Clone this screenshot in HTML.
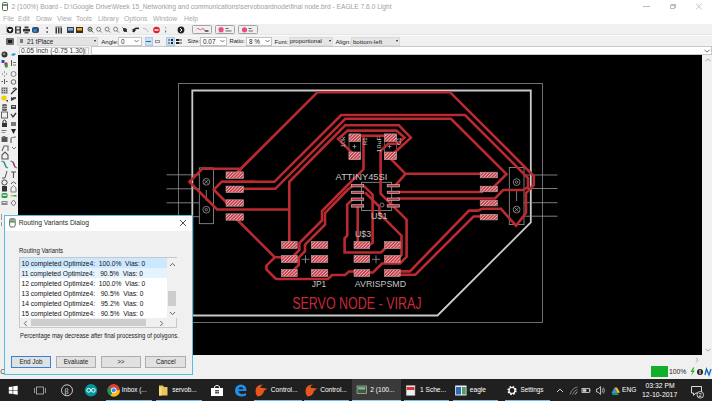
<!DOCTYPE html>
<html><head><meta charset="utf-8">
<style>
*{margin:0;padding:0;box-sizing:border-box}
html,body{width:712px;height:401px;overflow:hidden;background:#f0f0f0;font-family:"Liberation Sans",sans-serif;position:relative}
.a{position:absolute}
.nw{white-space:nowrap}
#title{left:0;top:0;width:712px;height:12px;background:#fff}
#menu{left:0;top:12px;width:712px;height:11.5px;background:#fff}
#menu span{position:absolute;top:2.5px;font-size:6.8px;color:#a8a8a8;line-height:8px}
#tb1{left:0;top:23.8px;width:712px;height:11.2px;background:#f0f0f0;border-bottom:1px solid #e6e6e6}
#tb2{left:0;top:35px;width:712px;height:10.5px;background:#f1f1f1;border-top:1px solid #f9f9f9}
#cmd{left:0;top:45.5px;width:712px;height:9.5px;background:#f0f0f0}
#canvas{left:18px;top:55px;width:684.4px;height:300px;background:#000;overflow:hidden}
#lefttb{left:0;top:46px;width:18px;height:317px;background:#f0f0f0}
#vscroll{left:703px;top:55px;width:9px;height:300px;background:#f0f0f0}
#hscroll{left:18px;top:355px;width:694px;height:8px;background:#f0f0f0}
#status{left:0;top:363px;width:712px;height:15.5px;background:#f0f0f0}
#taskbar{left:0;top:378.5px;width:712px;height:22.5px;background:#202020}
.combo{position:absolute;background:#fff;border:1px solid #c4c4c4;height:9px;top:0.7px;font-size:6.4px;color:#222;padding-left:2px;line-height:7.5px}
.lbl{position:absolute;top:1.9px;font-size:6.1px;color:#222;line-height:7px}
.dd{position:absolute;right:2px;top:0px;font-size:6px;color:#555}
.tbtn{position:absolute;top:1.6px;width:20.2px;height:8.4px;border:1px solid #a4a4a4;border-radius:1.5px;background:#efefef}
.ico{position:absolute}
.task{position:absolute;top:0;height:22.5px;font-size:6.8px;color:#fff;line-height:22px}
.uline{position:absolute;bottom:0;height:1.5px;background:#76b9ed}
</style></head><body>
<!-- TITLE BAR -->
<div id="title" class="a">
  <div class="a" style="left:2px;top:2.3px;width:6px;height:8.5px;border:1px solid #666;border-radius:1.5px;background:#fff"></div>
  <div class="a" style="left:3px;top:4px;width:4px;height:2px;background:#5aa55a"></div>
  <div class="a nw" style="left:11.5px;top:2.5px;font-size:6.65px;line-height:8px;color:#a0a0a0">2 (100%) Board - D:\Google Drive\Week 15_Networking and communications\servoboardnode\final node.brd - EAGLE 7.6.0 Light</div>
  <div class="a" style="left:643px;top:5.5px;width:6.5px;height:1px;background:#bdbdbd"></div>
  <div class="a" style="left:669.5px;top:4.5px;width:5px;height:4.5px;border:1px solid #bdbdbd"></div>
  <div class="a" style="left:670.5px;top:3.5px;width:5px;height:4.5px;border-top:1px solid #bdbdbd;border-right:1px solid #bdbdbd"></div>
  <svg class="a" style="left:695px;top:3px" width="8" height="7"><path d="M1 0.5 L6.5 6.5 M6.5 0.5 L1 6.5" stroke="#bdbdbd" stroke-width="0.9"/></svg>
</div>
<!-- MENU -->
<div id="menu" class="a">
  <span style="left:3px">File</span><span style="left:18px">Edit</span><span style="left:36px">Draw</span><span style="left:57px">View</span><span style="left:76px">Tools</span><span style="left:98px">Library</span><span style="left:124px">Options</span><span style="left:153px">Window</span><span style="left:184px">Help</span>
</div>
<!-- TOOLBAR 1 -->
<div id="tb1" class="a">
  <div class="a" style="left:5.5px;top:2px;width:1px;height:8px;border-left:1px dotted #bbb"></div>
  <svg class="a" style="left:0;top:0" width="270" height="12">
    <!-- open -->
    <circle cx="10" cy="6" r="3.3" fill="#222"/><path d="M8 5 L12 5 L10 8 Z" fill="#fff"/>
    <!-- save -->
    <rect x="15" y="2.5" width="6" height="7" fill="#333"/><rect x="16.5" y="3.3" width="3" height="2" fill="#eee"/><rect x="16.5" y="6.5" width="3" height="2.3" fill="#eee"/>
    <!-- print -->
    <rect x="23" y="5" width="7" height="2.5" fill="#333"/><rect x="24.5" y="2.5" width="4" height="2" fill="#444"/><rect x="24.5" y="8" width="4" height="1.5" fill="#555"/>
    <!-- cam -->
    <rect x="32" y="3" width="7" height="6" rx="2" fill="#3a4a66"/><circle cx="35" cy="6.5" r="1.8" fill="#1e90e0"/>
    <!-- dots -->
    <rect x="46.5" y="3" width="1.3" height="2" fill="#555"/><rect x="46.5" y="7" width="1.3" height="2" fill="#555"/>
    <!-- script -->
    <rect x="55.5" y="3.5" width="1.5" height="6" fill="#333"/><rect x="58" y="3.5" width="1.5" height="6" fill="#333"/><rect x="60.5" y="3.5" width="1.5" height="6" fill="#333"/>
    <rect x="55.5" y="2.5" width="6.5" height="1" fill="#777"/>
    <!-- brd/sch -->
    <rect x="67" y="3" width="7" height="6" fill="#2b3f57"/><rect x="68" y="4" width="5" height="2.5" fill="#8fb2cc"/>
    <rect x="76" y="3" width="7" height="6" fill="#3a2c12"/><rect x="77" y="4" width="5" height="2.5" fill="#f0a830"/>
    <!-- zooms -->
    <g fill="none" stroke="#333" stroke-width="0.9"><circle cx="90" cy="5.2" r="2"/><path d="M91.5 6.7 L93.3 8.5"/><path d="M89 5.2 H91" stroke-width="0.8"/></g>
    <g fill="none" stroke="#666" stroke-width="0.8"><circle cx="98.6" cy="5.2" r="2"/><path d="M100.1 6.7 L101.9 8.5"/></g>
    <g fill="none" stroke="#666" stroke-width="0.8"><circle cx="107.1" cy="5.2" r="2"/><path d="M108.6 6.7 L110.4 8.5"/></g>
    <g fill="none" stroke="#666" stroke-width="0.8"><circle cx="115.6" cy="5.2" r="2"/><path d="M117.1 6.7 L118.9 8.5"/></g>
    <g fill="none" stroke="#333" stroke-width="1"><path d="M122.5 3.5 L127 8"/><circle cx="125" cy="6" r="1.5" fill="#333"/></g>
    <!-- undo/redo -->
    <path d="M133 8 Q134 3.5 139 4.5" stroke="#222" stroke-width="1.4" fill="none"/><path d="M132 5 L134 8.5 L136 6" fill="#222"/>
    <path d="M143 4.5 Q147 4 148 8" stroke="#bbb" stroke-width="1" fill="none"/>
    <!-- stop -->
    <circle cx="156.5" cy="6" r="3.3" fill="#e0202a"/><rect x="154.5" y="5.3" width="4" height="1.4" fill="#fff"/>
    <rect x="165" y="3" width="1.2" height="1.2" fill="#999"/><rect x="165" y="6.5" width="1.2" height="2" fill="#777"/>
    <!-- help -->
    <circle cx="181" cy="6" r="3.4" fill="#222"/><path d="M180 4.2 L182 6 L180 7.8" stroke="#fff" stroke-width="1" fill="none"/>
  </svg>
  <div class="tbtn" style="left:192.3px"><svg width="18" height="7" style="position:absolute;left:1px;top:0"><path d="M2.5 3.5 Q3.5 1.5 5 3 T8 3 Q9 1.5 10 3.2 Q10.5 5.5 11 5" stroke="#e85070" stroke-width="0.9" fill="none"/><rect x="11" y="4" width="3.5" height="2" fill="#6a6a6a"/></svg></div>
  <div class="tbtn" style="left:215.3px"><svg width="18" height="7" style="position:absolute;left:1px;top:0"><path d="M2.5 1.3 L5.5 1.3 L6.8 3 L6 6.3 L2.2 6.3 L1.3 3 Z" fill="#ea4f78"/><rect x="8.5" y="2" width="3" height="0.9" fill="#555"/><rect x="8.5" y="4.5" width="6" height="0.9" fill="#555"/></svg></div>
  <div class="tbtn" style="left:238.3px"><svg width="18" height="7" style="position:absolute;left:1px;top:0"><circle cx="4.5" cy="3.8" r="2.6" fill="#ea4f78"/><rect x="8.5" y="2" width="3" height="0.9" fill="#555"/><rect x="8.5" y="4.5" width="4.5" height="0.9" fill="#555"/></svg></div>
</div>
<!-- TOOLBAR 2 -->
<div id="tb2" class="a">
  <div class="a" style="left:6px;top:1.5px;width:7.5px;height:7.5px;background:#6e6e6e;border-radius:1px"></div>
  <div class="a" style="left:7.5px;top:4px;width:4.5px;height:2.5px;background:#1a1a1a"></div>
  <div class="a" style="left:17px;top:0.5px;width:81px;height:9px;background:#e3e3e3;border:1px solid #d6d6d6"></div>
  <div class="a" style="left:19.7px;top:2.6px;width:3.8px;height:4.2px;background:#7a7a7a"></div>
  <div class="a nw" style="left:27px;top:1.6px;font-size:6.3px;line-height:7px;color:#222">21 tPlace</div>
  <div class="a" style="left:94px;top:4.3px;width:0;height:0;border-left:1.8px solid transparent;border-right:1.8px solid transparent;border-top:2px solid #222"></div>
  <div class="lbl" style="left:101.2px">Angle:</div>
  <div class="combo" style="left:118px;width:23.5px">0<svg class="a" style="right:1.5px;top:1.5px" width="5" height="4"><path d="M0.5 1 L2.5 3 L4.5 1" stroke="#555" stroke-width="0.8" fill="none"/></svg></div>
  <div class="a" style="left:144.5px;top:1px;width:8px;height:8.5px;background:#c9e1f5;border:1px solid #a6cdee"></div>
  <div class="a" style="left:146px;top:4.5px;width:5px;height:1px;background:#557"></div>
  <div class="a" style="left:154.5px;top:3.5px;width:5px;height:3px;border:1px solid #999"></div>
  <div class="a" style="left:166px;top:1px;width:8.5px;height:8.5px;background:#c9e1f5;border:1px solid #a6cdee"></div>
  <div class="a" style="left:167.5px;top:2.5px;width:2.5px;height:2.5px;background:#8c8c8c"></div>
  <div class="a" style="left:170.5px;top:2.5px;width:2.5px;height:2.5px;background:#222"></div>
  <div class="a" style="left:167.5px;top:5.5px;width:2.5px;height:2.5px;background:#8c8c8c"></div>
  <div class="a" style="left:170.5px;top:5.5px;width:2.5px;height:2.5px;background:#222"></div>
  <div class="a" style="left:176px;top:2.5px;width:2.5px;height:2.5px;background:#222"></div>
  <div class="a" style="left:179px;top:2.5px;width:2.5px;height:2.5px;background:#999"></div>
  <div class="a" style="left:176px;top:5.5px;width:2.5px;height:2.5px;background:#222"></div>
  <div class="a" style="left:179px;top:5.5px;width:2.5px;height:2.5px;background:#999"></div>
  <div class="lbl" style="left:187.4px;font-size:5.7px">Size:</div>
  <div class="combo" style="left:200px;width:27px">0.07<svg class="a" style="right:1.5px;top:1.5px" width="5" height="4"><path d="M0.5 1 L2.5 3 L4.5 1" stroke="#555" stroke-width="0.8" fill="none"/></svg></div>
  <div class="lbl" style="left:229.6px;font-size:5.9px">Ratio:</div>
  <div class="combo" style="left:245.9px;width:26.2px">8 %<svg class="a" style="right:1.5px;top:1.5px" width="5" height="4"><path d="M0.5 1 L2.5 3 L4.5 1" stroke="#555" stroke-width="0.8" fill="none"/></svg></div>
  <div class="lbl" style="left:274.5px">Font:</div>
  <div class="a" style="left:288.7px;top:0.5px;width:44.5px;height:9px;background:#e5e5e5;border:1px solid #dadada"></div>
  <div class="a nw" style="left:289.9px;top:1.8px;font-size:6.07px;line-height:7px;color:#222">proportional</div>
  <div class="a" style="left:328.6px;top:4.3px;width:0;height:0;border-left:1.8px solid transparent;border-right:1.8px solid transparent;border-top:2px solid #222"></div>
  <div class="lbl" style="left:335.4px;font-size:6.2px">Align:</div>
  <div class="a" style="left:351.3px;top:0.5px;width:49px;height:9px;background:#e5e5e5;border:1px solid #dadada"></div>
  <div class="a nw" style="left:352.9px;top:1.8px;font-size:6.2px;line-height:7px;color:#222">bottom-left</div>
  <div class="a" style="left:396px;top:4.3px;width:0;height:0;border-left:1.8px solid transparent;border-right:1.8px solid transparent;border-top:2px solid #222"></div>
</div>
<!-- CMD -->
<div id="cmd" class="a">
  <div class="a" style="left:18.5px;top:1px;width:65px;height:8.5px;background:#fff;border:1px solid #d0d0d0"></div>
  <div class="a nw" style="left:20.6px;top:1.8px;font-size:6.9px;line-height:7px;color:#333;transform:scaleX(0.975);transform-origin:0 0">0.05 inch (-0.75 1.30)</div>
  <div class="a" style="left:85px;top:1px;width:4px;height:8.5px;background:#f6f6f6;border:1px solid #d0d0d0"></div>
  <div class="a" style="left:90.5px;top:0.5px;width:621.5px;height:9px;background:#fff;border:1px solid #c8c8c8"></div>
  <svg class="a" style="left:704px;top:3px" width="6" height="4"><path d="M0.5 1 L3 3 L5.5 1" stroke="#555" stroke-width="0.8" fill="none"/></svg>
</div>
<!-- LEFT TOOLBAR -->
<div id="lefttb" class="a">
  <svg width="18" height="317" style="position:absolute;left:0;top:0">
    <g transform="translate(0,-46)">
    <circle cx="4.5" cy="54.5" r="3" fill="#333"/><circle cx="4" cy="54" r="1.3" fill="#888"/>
    <path d="M11 55 Q13 52 16 54 Q14 57 11 55Z" fill="#1e90e0"/>
    <rect x="1.5" y="60" width="3" height="3" fill="#2050c0"/><circle cx="6" cy="64" r="1.7" fill="#d02030"/><circle cx="6.3" cy="66" r="1.7" fill="#2ba050"/>
    <rect x="11" y="60" width="1" height="6" fill="#555"/><rect x="13" y="62" width="3" height="1" fill="#777"/><rect x="13" y="64.5" width="3" height="1" fill="#777"/>
    <g fill="#555"><rect x="4" y="71.5" width="1" height="1"/><rect x="2" y="73.5" width="1" height="1"/><rect x="6" y="73.5" width="1" height="1"/><rect x="4" y="75.5" width="1" height="1"/></g>
    <circle cx="13.5" cy="74" r="2.5" fill="none" stroke="#777" stroke-width="0.9"/>
    <g fill="#555"><rect x="1.5" y="81" width="1.5" height="1"/><rect x="6" y="81" width="1.5" height="1"/><rect x="4" y="79" width="1" height="5"/></g>
    <circle cx="13.5" cy="82" r="2.3" fill="none" stroke="#555" stroke-width="0.9"/>
    <rect x="1.5" y="87.5" width="6" height="6" fill="#666"/><g stroke="#ddd" stroke-width="0.6"><path d="M1.5 89.5 H7.5 M1.5 91.5 H7.5 M3.5 87.5 V93.5 M5.5 87.5 V93.5"/></g>
    <path d="M11 94 L14 91 M13 89 Q15 87 16.5 89 Q15 90 14 91" stroke="#333" stroke-width="1.2" fill="none"/>
    <circle cx="4" cy="98" r="2.6" fill="#f0d000"/><rect x="6.5" y="100" width="1.5" height="1.5" fill="#222"/>
    <path d="M11 97 L15 99 L11 101 Z" fill="#333"/><rect x="13" y="97" width="3" height="2" fill="#555"/>
    <rect x="2" y="104" width="5" height="7" rx="1.5" fill="#666"/><rect x="2" y="106" width="5" height="0.7" fill="#ccc"/><rect x="2" y="108" width="5" height="0.7" fill="#ccc"/>
    <rect x="11" y="105" width="5" height="4" fill="#444"/><rect x="12" y="106" width="3" height="1" fill="#ccc"/>
    <rect x="1.5" y="112" width="6" height="6" fill="none" stroke="#555" stroke-width="0.9"/>
    <path d="M11 114 L13 117 L16 113" stroke="#333" stroke-width="1.3" fill="none"/>
    <rect x="2" y="123" width="5" height="4" fill="#333"/><path d="M3 123 V121 Q4.5 119 6 121 V123" stroke="#333" fill="none"/>
    <rect x="11" y="122" width="5" height="4" fill="#777"/>
    <rect x="1.5" y="130" width="5" height="1" fill="#777"/><rect x="1.5" y="132" width="4" height="1" fill="#999"/>
    <path d="M11 129 L16 129 L13.5 134 Z" fill="#222"/>
    <rect x="1.5" y="137" width="6" height="5" fill="#555"/><rect x="2.5" y="136" width="3" height="1.5" fill="#777"/>
    <path d="M11 143 V139 Q11 137 16 137" stroke="#666" stroke-width="1.2" fill="none"/>
    <path d="M2 151 L4 146 L8 146 L8 151" fill="none" stroke="#666" stroke-width="1.1"/>
    <path d="M12 147 L14 149 L16 147" stroke="#555" stroke-width="0.8" fill="none"/>
    <path d="M2 159 L2 155 L5 152 L8 155 L8 159 Z" fill="none" stroke="#555" stroke-width="1.1"/>
    <path d="M1.5 161 L4 162 L6 167 L8 168" stroke="#2a8ad0" stroke-width="1.2" fill="none"/><path d="M4 162 L6 167" stroke="#2aa050" stroke-width="1.2"/>
    <path d="M10.5 161 L13 162 L15 167 L17 168" stroke="#2a8ad0" stroke-width="1.2" fill="none"/><path d="M13 162 L15 167" stroke="#e02030" stroke-width="1.2"/>
    <path d="M2 178 L5 178 L7 171" stroke="#555" stroke-width="1" fill="none"/>
    <path d="M11 172 H16 M13.5 172 V178" stroke="#555" stroke-width="1.1" fill="none"/>
    <circle cx="4.5" cy="182.5" r="2.6" fill="none" stroke="#444" stroke-width="1"/>
    <path d="M11 184 Q13.5 180 16 184" stroke="#555" stroke-width="1" fill="none"/>
    <rect x="2" y="186" width="5" height="5.5" fill="#333"/>
    <path d="M11 192 L11 188 L13.5 185.5 L16 188 L16 192 Z" fill="none" stroke="#777" stroke-width="0.9"/>
    <rect x="1.5" y="193" width="6" height="5" rx="1.5" fill="#2ba048"/><rect x="2.5" y="194.5" width="4" height="1.5" fill="#ddd"/>
    <rect x="10.5" y="195" width="3" height="1.5" fill="#e6c000"/><rect x="13.5" y="195" width="3" height="1.5" fill="#2aa050"/>
    <rect x="1.5" y="201" width="6" height="4" fill="#888"/><rect x="2.5" y="202" width="4" height="1" fill="#ddd"/>
    <path d="M11 203 L13.5 200 L16 203 L13.5 206 Z" fill="none" stroke="#777" stroke-width="1"/>
    <path d="M1.5 214 V220 M1.5 222 V226" stroke="#888" stroke-width="0.8"/>
    </g>
  </svg>
</div>
<!-- CANVAS -->
<div id="canvas" class="a">
  <svg width="685" height="300" style="position:absolute;left:0;top:0">
    <g transform="translate(-18,-55)">
    <defs>
      <pattern id="hatch" patternUnits="userSpaceOnUse" width="2.3" height="2.3" patternTransform="rotate(45)">
        <rect width="2.3" height="2.3" fill="#c42f3a"/>
        <rect width="0.95" height="2.3" fill="#ebbcc0"/>
      </pattern>
    </defs>
    <!-- gray outer rect -->
    <rect x="178.5" y="83.5" width="364" height="239" fill="none" stroke="#7a7a7a" stroke-width="0.9"/>
    <!-- board outline -->
    <path d="M192.3 90.5 H530.8 V222.5 L437.5 315.5 H192.3 Z" fill="none" stroke="#cacaca" stroke-width="1.8"/>
    <!-- connector gray lines -->
    <g stroke="#9a9a9a" stroke-width="0.8" fill="none">
      <path d="M166.6 174.8 H199.3 M166.6 188.8 H199.3 M166.6 202.8 H199.3 M166.6 216.7 H199.3"/>
      <path d="M524 175 H557.5 M524 188.5 H557.5 M524 202.7 H557.5 M524 216.2 H557.5"/>
      <rect x="199.3" y="167.9" width="14.1" height="55.8"/>
      <rect x="509.3" y="167.5" width="14.7" height="57.1"/>
      <circle cx="206.3" cy="181.8" r="3.4"/><circle cx="206.3" cy="209.7" r="3.4"/>
      <circle cx="516.6" cy="182.1" r="3.4"/><circle cx="516.6" cy="209.6" r="3.4"/>
      <path d="M204.3 179.8 L208.3 183.8 M208.3 179.8 L204.3 183.8"/>
      <path d="M514.6 207.6 L518.6 211.6 M518.6 207.6 L514.6 211.6"/>
      <circle cx="206.3" cy="209.7" r="1.2"/><circle cx="516.6" cy="182.1" r="1.2"/>
      <path d="M206.3 190 V201 M516.6 190 V201"/>
      <!-- R1 C1 outlines -->
      <rect x="349" y="134" width="11.5" height="25.5" stroke="#8a8a8a" stroke-width="0.6"/>
      <rect x="384.5" y="134" width="12" height="25.5" stroke="#8a8a8a" stroke-width="0.6"/>
      <path d="M352.5 146.5 H356.5 M354.5 144.5 V148.5 M387.5 146.5 H391.5 M389.5 144.5 V148.5"/>
      <!-- IC outline -->
      <rect x="361.4" y="182.3" width="30.3" height="28.1"/>
      <circle cx="382" cy="205" r="2"/>
      <path d="M301.5 259.3 H309.5 M305.5 255.3 V263.3 M372 259.3 H380 M376 255.3 V263.3"/>
    </g>
    <!-- traces -->
    <g stroke="#bb2a30" stroke-width="2.6" fill="none" stroke-linejoin="miter" stroke-miterlimit="3">
      <path d="M237 175 L241 168.7 L202.5 168.7 L189.4 181.8 L217 209.5 L289.3 209.5"/>
      <path d="M232 177.5 L249.6 160 L317.5 92.2 L450 92.2 L533.8 176 L533.8 185 L526 193 L526 212.8 L516 225.7 L501 208.8 L482 208.8 L478 210.6 L469 210.6 L409.9 271.4 L398 271.4"/>
      <path d="M255 181.8 L221.6 181.8 L213.8 189.7 L227 203"/>
      <path d="M221.6 181.8 L274.4 181.8 L341.2 115 L465 115 L528 178 L528 187 L523 190 L503 190 L495 198.5 L397 198.5"/>
      <path d="M240 188.8 L275.3 188.8 L345.3 118.75 L451 118.75 L506.5 174.2 L494 186.7"/>
      <path d="M397 192 L483 192"/>
      <path d="M389 157 L405.5 173.8 L482 173.8 M405.5 173.8 L395 185.9"/>
      <path d="M289.3 244 L289.3 181.8 L345.2 125.3 L398.9 125.3 L410.9 137.6 L389.4 157.2"/>
      <path d="M355 156 L338.2 138.9 L347.7 130.6 L396.4 130.6 L404.5 137.5 L398 143.8 L388 143.8 L380.6 151.2 L380.6 193.7 L406.6 219.7 L406.6 256.8 L400 263.5 L382 263.5 L373 272.5 L365 272.5"/>
      <path d="M360 135.7 L384.4 135.7"/>
      <path d="M363.5 135.7 L363.5 169.3 L342.3 190.5 L322 211 L322 220.5 L299.4 243 L299.4 250 L290 259.5"/>
      <path d="M352.5 185.9 L347.3 190 L325 213 L325 224.7 L305 244.7 L305 251.2 L298.7 257.5 L298.7 265 L291.2 272.5"/>
      <path d="M363.8 185.9 L372.6 194.7 L372.6 242.6 L368.2 246"/>
      <path d="M352.5 199.5 L347.2 204.5 L347.2 235.6 L344.6 238.3 L344.6 252.5 L381 252.5 L388 245.5"/>
      <path d="M357.7 206 L357.7 242"/>
      <path d="M365 192.3 L379.3 206.6 L379.3 213.5 L401.5 235.7 L401.5 255 L395 261.5"/>
      <path d="M235 217.5 L274.8 257.3 L282 257.3 M274.8 257.3 L266.4 265.7 L266.4 269.5 L276 279 L328 279 L332 275 L345 275 L349 271.5 L356 271.5"/>
      <path d="M485 216.5 L473.5 216.5 L415.3 274.7 L398 274.7"/>
    </g>
    <!-- pads -->
    <g fill="url(#hatch)" stroke="#b4a4a6" stroke-width="0.6">
      <rect x="226" y="171.9" width="17.5" height="6.4"/>
      <rect x="226" y="186.1" width="17.5" height="6.4"/>
      <rect x="226" y="199.8" width="17.5" height="6.4"/>
      <rect x="226" y="213.8" width="17.5" height="6.4"/>
      <rect x="480.2" y="172.2" width="17.3" height="5.6"/>
      <rect x="480.2" y="186.2" width="17.3" height="5.6"/>
      <rect x="480.2" y="200.3" width="17.3" height="5.6"/>
      <rect x="480.2" y="214.3" width="17.3" height="5.6"/>
      <rect x="349" y="134" width="11.5" height="7.5"/>
      <rect x="349" y="152" width="11.5" height="7.5"/>
      <rect x="384.5" y="134" width="12" height="7.5"/>
      <rect x="384.5" y="152" width="12" height="7.5"/>
      <rect x="281.4" y="241.5" width="15.8" height="7"/>
      <rect x="311.3" y="241.5" width="16.5" height="7"/>
      <rect x="281.4" y="255.5" width="15.8" height="7"/>
      <rect x="311.3" y="255.5" width="16.5" height="7"/>
      <rect x="281.4" y="269.5" width="15.8" height="7"/>
      <rect x="311.3" y="269.5" width="16.5" height="7"/>
      <rect x="354" y="241.6" width="15.7" height="7"/>
      <rect x="384.5" y="241.6" width="15.7" height="7"/>
      <rect x="354" y="255.5" width="15.7" height="7"/>
      <rect x="384.5" y="255.5" width="15.7" height="7"/>
      <rect x="354" y="269.5" width="15.7" height="7"/>
      <rect x="384.5" y="269.5" width="15.7" height="7"/>
    </g>
    <!-- IC pads -->
    <g fill="#c23038" stroke="#bdbdbd" stroke-width="0.7">
      <rect x="351.3" y="184.5" width="12.4" height="2.4"/>
      <rect x="351.3" y="191.2" width="12.4" height="2.4"/>
      <rect x="351.3" y="198" width="12.4" height="2.4"/>
      <rect x="351.3" y="204.7" width="12.4" height="2.4"/>
      <rect x="387.2" y="184.5" width="12.4" height="2.4"/>
      <rect x="387.2" y="191.2" width="12.4" height="2.4"/>
      <rect x="387.2" y="198" width="12.4" height="2.4"/>
      <rect x="387.2" y="204.7" width="12.4" height="2.4"/>
    </g>
    <!-- labels -->
    <g fill="#c4c4c4" font-family="Liberation Sans" font-size="9.1">
      <text x="335.6" y="180.3" textLength="51.8" lengthAdjust="spacingAndGlyphs">ATTINY45SI</text>
      <text x="371" y="218.8" textLength="16.4" lengthAdjust="spacingAndGlyphs">U$1</text>
      <text x="355" y="237.4" textLength="16" lengthAdjust="spacingAndGlyphs">U$3</text>
      <text x="311.8" y="286.9" textLength="14.4" lengthAdjust="spacingAndGlyphs">JP1</text>
      <text x="354.8" y="286.9" textLength="51.2" lengthAdjust="spacingAndGlyphs">AVRISPSMD</text>
    </g>
    <g fill="#c8c8c8" font-family="Liberation Sans" font-size="5">
      <text transform="translate(344.6,147.5) rotate(-90)" font-size="6" textLength="11" lengthAdjust="spacingAndGlyphs">10k</text>
      <text transform="translate(366.6,145) rotate(-90)" font-size="6" textLength="7.5" lengthAdjust="spacingAndGlyphs">R1</text>
      <text transform="translate(381.2,152.5) rotate(-90)" font-size="6" textLength="16.5" lengthAdjust="spacingAndGlyphs">10uF</text>
      <text transform="translate(401.2,145) rotate(-90)" font-size="6" textLength="7.5" lengthAdjust="spacingAndGlyphs">C1</text>
    </g>
    <text x="292.2" y="309.2" fill="#c8283a" font-family="Liberation Sans" font-size="15.6" textLength="129.4" lengthAdjust="spacingAndGlyphs">SERVO NODE - VIRAJ</text>
    </g>
  </svg>
</div>
<!-- SCROLLBARS -->
<div id="vscroll" class="a">
  <svg class="a" style="left:2px;top:3px" width="6" height="4"><path d="M0.5 3 L3 1 L5.5 3" stroke="#999" stroke-width="0.8" fill="none"/></svg>
  <svg class="a" style="left:2px;top:293px" width="6" height="4"><path d="M0.5 1 L3 3 L5.5 1" stroke="#999" stroke-width="0.8" fill="none"/></svg>
</div>
<div id="hscroll" class="a">
  <svg class="a" style="left:677px;top:2px" width="4" height="6"><path d="M1 0.5 L3 3 L1 5.5" stroke="#999" stroke-width="0.8" fill="none"/></svg>
</div>
<!-- STATUS -->
<div id="status" class="a">
  <div class="a nw" style="left:0.3px;top:5px;font-size:7px;line-height:8px;color:#333">C</div>
  <div class="a" style="left:650.5px;top:3px;width:17.5px;height:11px;background:#11b02a"></div>
  <div class="a nw" style="left:669px;top:5px;font-size:6.8px;line-height:7px;color:#222">100%</div>
  <svg class="a" style="left:689px;top:4px" width="23" height="10">
    <path d="M4 0.5 L1.5 5 L3.5 5 L2 9 L6 3.5 L4 3.5 L5.5 0.5Z" fill="#3cb030"/>
    <circle cx="11" cy="5" r="3" fill="#222"/><rect x="10.5" y="3" width="1" height="4" fill="#fff"/>
    <path d="M16 8 L17.5 2 L20 8 L22 2" stroke="#1060c0" stroke-width="1.3" fill="none"/>
  </svg>
</div>
<!-- TASKBAR -->
<div id="taskbar" class="a">
  <svg class="a" style="left:0;top:0" width="712" height="23">
    <!-- windows logo -->
    <g fill="#fff"><path d="M8.8 8 L12.6 7.4 V10.9 H8.8Z"/><path d="M13.2 7.3 L17.7 6.7 V10.9 H13.2Z"/><path d="M8.8 11.5 H12.6 V15 L8.8 14.5Z"/><path d="M13.2 11.5 H17.7 V15.8 L13.2 15.1Z"/></g>
    <!-- task view -->
    <rect x="36.5" y="8" width="7" height="7" fill="none" stroke="#bbb" stroke-width="0.8"/><path d="M34.5 9 V14 M45.5 9 V14" stroke="#bbb" stroke-width="0.8"/>
    <!-- beta circle -->
    <circle cx="67" cy="11.3" r="5.5" fill="none" stroke="#ddd" stroke-width="0.9"/><text x="64.5" y="14.5" fill="#ddd" font-size="8" font-family="Liberation Serif">β</text>
    <!-- arduino -->
    <circle cx="91" cy="11.3" r="6.2" fill="#00979d"/><path d="M86.8 11.3 a1.9 1.9 0 1 1 3.8 0 a1.9 1.9 0 1 1 -3.8 0 M91.4 11.3 a1.9 1.9 0 1 1 3.8 0 a1.9 1.9 0 1 1 -3.8 0" fill="none" stroke="#fff" stroke-width="1"/>
    <!-- chrome -->
    <circle cx="113.7" cy="11.3" r="6.2" fill="#db4437"/><path d="M113.7 11.3 L108.3 8.2 A6.2 6.2 0 0 0 110.6 16.7Z" fill="#0f9d58"/><path d="M113.7 11.3 L110.6 16.7 A6.2 6.2 0 0 0 119.9 11.3Z" fill="#f4c20d"/><circle cx="113.7" cy="11.3" r="2.8" fill="#fff"/><circle cx="113.7" cy="11.3" r="2.1" fill="#4285f4"/>
    <!-- folder -->
    <path d="M159 6.5 L163 6.5 L164 8 L167.5 8 L167.5 16.5 L159 16.5Z" fill="#e8c45a"/><rect x="159" y="8.5" width="2.5" height="8" fill="#f5dc8a"/>
    <!-- store -->
    <path d="M211 9 H223 V17 H211Z" fill="#fff"/><path d="M214.5 9 V7.5 Q217 5 219.5 7.5 V9" fill="none" stroke="#fff" stroke-width="0.9"/>
    <g fill="#202020"><rect x="215.3" y="11" width="1.5" height="1.5"/><rect x="217.3" y="11" width="1.5" height="1.5"/><rect x="215.3" y="13" width="1.5" height="1.5"/><rect x="217.3" y="13" width="1.5" height="1.5"/></g>
    <!-- edge -->
    <path d="M235 12 Q235 5.5 241 5.5 Q246.5 5.5 246.5 12 H238.5 Q239 15 242 15 Q244.5 15 246 14 V16.5 Q244 17.5 241.5 17.5 Q235 17 235 12Z M238.5 10.3 H243.5 Q243 8 241 8 Q239 8 238.5 10.3Z" fill="#1d8fe5"/>
    <!-- control flames -->
    <path d="M255.5 11.5 Q256 5.5 263 5.5 Q259.5 7.5 261 9 Q264.5 8.5 267.5 10 Q265 10.5 264 12 Q263 17 257.5 17.5 Q255.3 15.5 255.5 11.5Z" fill="#e8551e"/>
    <path d="M305.5 11.5 Q306 5.5 313 5.5 Q309.5 7.5 311 9 Q314.5 8.5 317.5 10 Q315 10.5 314 12 Q313 17 307.5 17.5 Q305.3 15.5 305.5 11.5Z" fill="#e8551e"/>
    <!-- eagle board icon -->
    <rect x="356.9" y="7" width="9.3" height="7.5" fill="#3d5a45" stroke="#bbb" stroke-width="0.7"/><rect x="358" y="8.2" width="7" height="2.3" fill="#7fc08a"/>
    <!-- sch icon -->
    <rect x="406.2" y="6.5" width="8.8" height="10" fill="#eee" stroke="#999" stroke-width="0.5"/><rect x="406.8" y="8" width="7.6" height="3" fill="#d33"/>
    <!-- eagle folder icon -->
    <rect x="455.2" y="6.5" width="11.3" height="10" fill="#eef" /><rect x="456" y="8" width="5" height="7.5" fill="#2a6db0"/><rect x="462" y="8" width="3.8" height="7.5" fill="#5a9a5a"/>
    <!-- settings gear -->
    <circle cx="512" cy="11.5" r="3.8" fill="none" stroke="#fff" stroke-width="1.7" stroke-dasharray="1.6 1.4"/><circle cx="512" cy="11.5" r="3" fill="none" stroke="#fff" stroke-width="1.2"/>
    <!-- tray -->
    <path d="M557 13 L560 10 L563 13" stroke="#ddd" stroke-width="0.9" fill="none"/>
    <path d="M570 15.5 Q572 9 577.5 8" stroke="#999" stroke-width="0.8" fill="none"/><path d="M572.5 15.5 Q574 11.5 577.5 10.5" stroke="#999" stroke-width="0.8" fill="none"/><path d="M575 15.5 Q576 13.5 577.5 13" stroke="#ccc" stroke-width="0.8" fill="none"/>
    <rect x="582" y="9.5" width="7.5" height="4" fill="none" stroke="#ddd" stroke-width="0.8"/><rect x="582.8" y="10.3" width="3.5" height="2.4" fill="#ddd"/><rect x="589.7" y="10.6" width="0.8" height="1.8" fill="#ddd"/>
    <path d="M596.5 10 H598 L600.5 7.5 V15.5 L598 13 H596.5Z" fill="none" stroke="#ddd" stroke-width="0.8"/><path d="M602 9.5 Q603.5 11.5 602 13.5 M603.5 8.5 Q605.5 11.5 603.5 14.5" stroke="#ddd" stroke-width="0.7" fill="none"/>
    <path d="M611.5 14 L614.5 8.5 L617.5 14Z" fill="#4285f4"/><path d="M614.5 8.5 L617 8.5 L620 13.5 L617.5 14Z" fill="#f4c20d"/><path d="M611.5 14 H617.5 L619 16 H612.8Z" fill="#0f9d58"/>
    <!-- notification -->
    <path d="M691.5 7.5 H701.5 V14 H696 L693.5 16.3 V14 H691.5Z" fill="none" stroke="#eee" stroke-width="0.9"/>
    <circle cx="700.3" cy="15.8" r="3.3" fill="#202020" stroke="#eee" stroke-width="0.8"/><text x="698.6" y="18" fill="#fff" font-size="5.6" font-family="Liberation Sans">2</text>
  </svg>
  <div class="a" style="left:351.8px;top:0;width:49.3px;height:22.5px;background:#3a3a3a"></div>
  <svg class="a" style="left:351.8px;top:0" width="50" height="23"><rect x="5.1" y="7" width="9.3" height="7.5" fill="#3d5a45" stroke="#bbb" stroke-width="0.7"/><rect x="6.2" y="8.2" width="7" height="2.3" fill="#7fc08a"/></svg>
  <div class="task nw" style="left:121.8px;font-size:6.4px">Inbox (...</div>
  <div class="task nw" style="left:172.2px;font-size:6.4px">servob...</div>
  <div class="task nw" style="left:270.8px;font-size:6.6px">Control...</div>
  <div class="task nw" style="left:320.2px;font-size:6.6px">Control...</div>
  <div class="task nw" style="left:370.3px;font-size:6.6px">2 (100...</div>
  <div class="task nw" style="left:420px;font-size:6.6px">1 Sche...</div>
  <div class="task nw" style="left:469.8px;font-size:6.6px">eagle</div>
  <div class="task nw" style="left:520.4px;font-size:6.4px">Settings</div>
  <div class="task nw" style="left:622px;font-size:6.6px">ENG</div>
  <div class="a nw" style="left:645.5px;top:3px;font-size:6.8px;line-height:7px;color:#fff">03:32 PM</div>
  <div class="a nw" style="left:642px;top:12.5px;font-size:6.9px;line-height:7px;color:#fff">12-10-2017</div>
  <div class="uline" style="left:105.7px;width:46px"></div>
  <div class="uline" style="left:156.3px;width:45.5px"></div>
  <div class="uline" style="left:253.6px;width:48px"></div>
  <div class="uline" style="left:303.8px;width:45.5px"></div>
  <div class="uline" style="left:351.8px;width:49.3px;background:#99d0f5"></div>
  <div class="uline" style="left:403.6px;width:45.5px"></div>
  <div class="uline" style="left:452.6px;width:45.5px"></div>
  <div class="uline" style="left:504.5px;width:45.5px"></div>
</div>
<!-- DIALOG -->
<div id="dlg" class="a" style="left:4px;top:214.5px;width:189px;height:160px;background:#f0f0f0;border:1px solid #5cbcdc">
  <div class="a" style="left:0;top:0;width:187px;height:15.5px;background:#fff"></div>
  <svg class="a" style="left:4.3px;top:2.5px" width="8" height="10"><rect x="0.6" y="0.6" width="5.6" height="8.4" rx="1.6" fill="#fff" stroke="#555" stroke-width="0.9"/><rect x="0.6" y="0.6" width="5.6" height="2.2" fill="#999"/><rect x="1.1" y="2.8" width="4.6" height="1.8" fill="#4aa35a"/></svg>
  <div class="a nw" style="left:13.7px;top:3.6px;font-size:6.75px;line-height:8px;color:#2a2a2a">Routing Variants Dialog</div>
  <svg class="a" style="left:174px;top:3.5px" width="8" height="8"><path d="M1 1 L7 7 M7 1 L1 7" stroke="#444" stroke-width="0.9"/></svg>
  <div class="a nw" style="left:14.4px;top:31.6px;font-size:6.56px;line-height:7px;color:#222;transform:scaleX(0.92);transform-origin:0 0">Routing Variants</div>
  <div class="a" style="left:13.9px;top:41.7px;width:158.3px;height:70.4px;background:#fff;border:1px solid #c8c8c8">
    <div class="a" style="left:0;top:0.3px;width:147.5px;height:9.9px;background:#cce8ff"></div>
    <div class="a" style="left:0;top:10.2px;width:147.5px;height:10px;background:#e5f3ff"></div>
    <div class="a nw" style="left:1.6px;top:0.5px;font-size:6.66px;line-height:10.05px;color:#111;white-space:pre">10 completed Optimize4:  100.0%  Vias: 0
11 completed Optimize4:   90.5%  Vias: 0
12 completed Optimize4:  100.0%  Vias: 0
13 completed Optimize4:   90.5%  Vias: 0
14 completed Optimize4:   95.2%  Vias: 0
15 completed Optimize4:   90.5%  Vias: 0</div>
    <div class="a" style="left:147.5px;top:0;width:9.3px;height:59.5px;background:#f0f0f0"></div>
    <div class="a" style="left:148.5px;top:32.5px;width:7.5px;height:15px;background:#cdcdcd"></div>
    <svg class="a" style="left:149px;top:3.5px" width="7" height="5"><path d="M1 4 L3.5 1.3 L6 4" stroke="#555" stroke-width="0.9" fill="none"/></svg>
    <svg class="a" style="left:149px;top:53px" width="7" height="5"><path d="M1 1 L3.5 3.7 L6 1" stroke="#555" stroke-width="0.9" fill="none"/></svg>
    <div class="a" style="left:0;top:59.5px;width:156.3px;height:9.4px;background:#f0f0f0"></div>
    <div class="a" style="left:11px;top:60.8px;width:115px;height:7px;background:#cdcdcd"></div>
    <svg class="a" style="left:3.5px;top:61.5px" width="5" height="7"><path d="M3.7 1 L1.3 3.5 L3.7 6" stroke="#555" stroke-width="0.9" fill="none"/></svg>
    <svg class="a" style="left:139.5px;top:61.5px" width="5" height="7"><path d="M1.3 1 L3.7 3.5 L1.3 6" stroke="#555" stroke-width="0.9" fill="none"/></svg>
  </div>
  <div class="a nw" style="left:14.6px;top:116.8px;font-size:7px;line-height:7px;color:#222;transform:scaleX(0.845);transform-origin:0 0">Percentage may decrease after final processing of polygons.</div>
  <div class="a" style="left:5.6px;top:140.7px;width:40.7px;height:11.6px;background:#e1e1e1;border:1px solid #2f86d8;font-size:6.3px;line-height:9.6px;text-align:center;color:#222">End Job</div>
  <div class="a" style="left:50.5px;top:140.7px;width:40.8px;height:11.6px;background:#e1e1e1;border:1px solid #adadad;font-size:6.3px;line-height:9.6px;text-align:center;color:#222">Evaluate</div>
  <div class="a" style="left:95.5px;top:140.7px;width:40.7px;height:11.6px;background:#e1e1e1;border:1px solid #adadad;font-size:6.3px;line-height:9.6px;text-align:center;color:#222">&gt;&gt;</div>
  <div class="a" style="left:140.4px;top:140.7px;width:40.8px;height:11.6px;background:#e1e1e1;border:1px solid #adadad;font-size:6.3px;line-height:9.6px;text-align:center;color:#222">Cancel</div>
</div>
</body></html>
